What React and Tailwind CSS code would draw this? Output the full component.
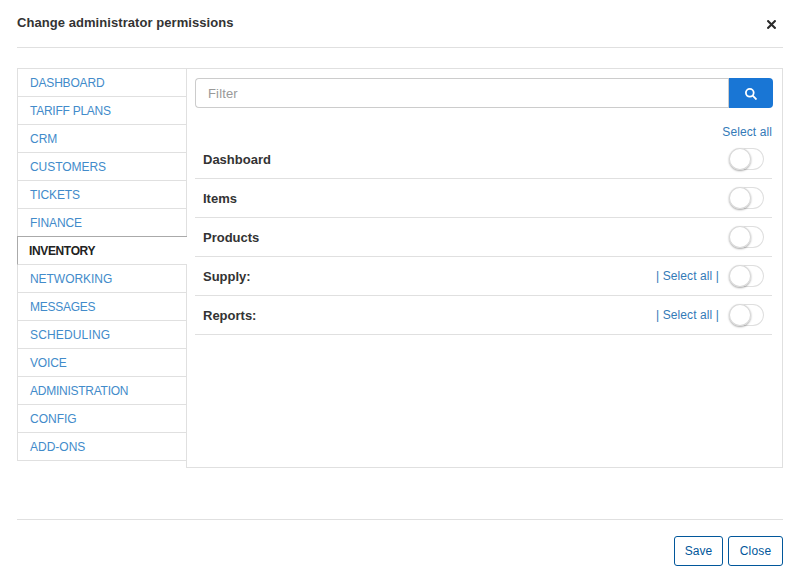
const tabs = [
  ['DASHBOARD', 'tracking-[-0.18px]'],
  ['TARIFF PLANS', 'tracking-[-0.25px]'],
  ['CRM', 'tracking-[0px]'],
  ['CUSTOMERS', 'tracking-[-0.05px]'],
  ['TICKETS', 'tracking-[-0.1px]'],
  ['FINANCE', 'tracking-[-0.1px]'],
  ['INVENTORY', 'tracking-[-0.36px]'],
  ['NETWORKING', 'tracking-[-0.05px]'],
  ['MESSAGES', 'tracking-[-0.25px]'],
  ['SCHEDULING', 'tracking-[0.15px]'],
  ['VOICE', 'tracking-[-0.15px]'],
  ['ADMINISTRATION', 'tracking-[-0.25px]'],
  ['CONFIG', 'tracking-[0px]'],
  ['ADD-ONS', 'tracking-[0px]'],
];

const rows = [
  { label: 'Dashboard' },
  { label: 'Items' },
  { label: 'Products' },
  { label: 'Supply:', group: true },
  { label: 'Reports:', group: true },
];

function Toggle() {
  return (
    <button className="flex h-[22px] w-[35px] rounded-full bg-white shadow-[inset_0_0_0_1px_#dfdfdf]">
      <span className="size-[22px] rounded-full bg-white shadow-[inset_0_0_0_1px_#d8d8d8,0_1px_2px_rgba(0,0,0,0.35)]" />
    </button>
  );
}

export default function App() {
  return (
    <div className="h-[575px] w-[801px] bg-white pl-[17px] pr-[18px] font-['Liberation_Sans',Arial,sans-serif] text-[12px] text-[#333]">
      <header className="flex h-12 items-start justify-between border-b border-[#e0e0e0] pt-[14px]">
        <h1 className="text-[13px] leading-[18px] font-bold tracking-[0.06px] whitespace-nowrap">Change administrator permissions</h1>
        <svg className="mt-[6px] mr-[7px] size-[9px]" viewBox="0 0 9 9" fill="none" stroke="#2b2b2b" strokeWidth="2.1">
          <path d="M0.4 0.4 8.6 8.6M8.6 0.4 0.4 8.6" />
        </svg>
      </header>

      <main className="mt-5 flex h-[400px] items-start">
        <nav className="relative z-10 -mr-px w-[170px] border-t border-[#e0e0e0]">
          {tabs.map(([name, track]) =>
            name === 'INVENTORY' ? (
              <a key={name} className="-mt-px block h-[29px] border-t border-b border-l border-t-[#aaa] border-b-[#e0e0e0] border-l-[#aaa] bg-white pl-[11px] leading-[29px] font-bold text-[#222]">
                <span className={track}>{name}</span>
              </a>
            ) : (
              <a key={name} className="block h-7 border-x border-b border-[#e0e0e0] pl-3 leading-[29px] text-[#428bca]">
                <span className={track}>{name}</span>
              </a>
            ),
          )}
        </nav>

        <section className="h-[400px] flex-1 border border-[#e0e0e0] pt-[9px] pr-[10px] pl-2">
          <div className="-mr-px flex h-[30px]">
            <input placeholder="Filter" className="min-w-0 flex-1 rounded-l-[4px] border border-r-0 border-[#ccc] px-3 pt-[2px] text-[13px] tracking-[0.15px] outline-none placeholder:text-[#999]" />
            <button className="flex w-[45px] items-center justify-center rounded-r-[4px] border-l border-[#ccc] bg-[#1976d5]">
              <svg className="mt-[2px] size-3" viewBox="0 0 12 12" fill="none" stroke="#fff" strokeWidth="1.8">
                <circle cx="4.8" cy="4.8" r="3.9" />
                <path d="M7.7 7.7l3.8 3.8" />
              </svg>
            </button>
          </div>
          <div className="mt-4 flex h-4 items-center justify-end leading-4 tracking-[0.1px] text-[#337ab7]">
            <a>Select all</a>
          </div>
          {rows.map((r) => (
            <div key={r.label} className="flex h-[39px] items-center border-b border-[#e0e0e0] pr-2 pl-2">
              <span className="flex-1 pt-[2px] text-[13px] font-bold">{r.label}</span>
              {r.group && <a className="mr-[10px] tracking-[0.1px] text-[#337ab7]">| Select all |</a>}
              <Toggle />
            </div>
          ))}
        </section>
      </main>

      <footer className="mt-[51px] flex justify-end gap-[5px] border-t border-[#e0e0e0] pt-4 text-[#01579b]">
        <button className="h-[30px] w-[49px] rounded-[3px] border border-[#01579b]">Save</button>
        <button className="h-[30px] w-[55px] rounded-[3px] border border-[#01579b] tracking-[0.2px]">Close</button>
      </footer>
    </div>
  );
}
